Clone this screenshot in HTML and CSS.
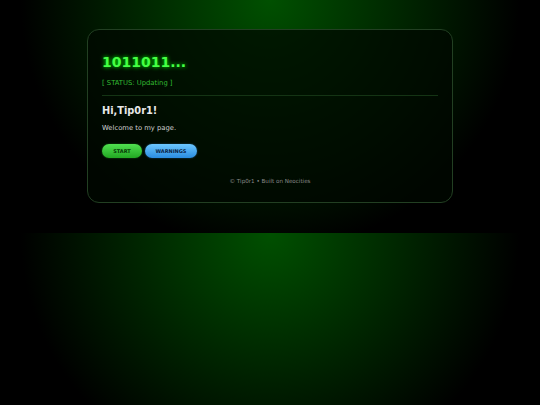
FILE: index.html
```html
<!DOCTYPE html>
<html lang="en">
<head>
<meta charset="utf-8">
<title>Tip0r1</title>
<link rel="stylesheet" href="styles.css">
</head>
<body>
<main class="card">
  <h1 class="title">1011011...</h1>
  <p class="status">[ STATUS: Updating ]</p>
  <hr class="divider">
  <h2 class="greeting">Hi,Tip0r1!</h2>
  <p class="welcome">Welcome to my page.</p>
  <div class="buttons">
    <a class="btn btn-start" href="#">START</a>
    <a class="btn btn-warn" href="#">WARNINGS</a>
  </div>
  <footer class="footer">© Tip0r1 • Built on Neocities</footer>
</main>
</body>
</html>
```
FILE: styles.css
```css
html {
  margin: 0;
  padding: 0;
}
body {
  margin: 0;
  padding: 29px 0 30px;
  font-family: "DejaVu Sans", Verdana, sans-serif;
  background: radial-gradient(circle at top, #005000 0%, #000000 70%);
  color: #cccccc;
}
.card {
  box-sizing: border-box;
  width: 366px;
  margin: 0 auto;
  padding: 24px 14px 17px;
  border: 1px solid #223f22;
  border-radius: 12px;
  background: rgba(0, 8, 0, 0.74);
}
.title {
  margin: 0;
  font-family: "DejaVu Sans", Verdana, sans-serif;
  font-weight: bold;
  font-size: 14px;
  line-height: 16px;
  color: #44ff44;
  text-shadow: 0 0 4px #00ff00;
}
.status {
  margin: 9px 0 0;
  font-size: 6.8px;
  line-height: 8px;
  color: #33bb33;
}
.divider {
  margin: 8px 0 0;
  border: 0;
  border-top: 1px solid #143414;
  height: 0;
}
.greeting {
  margin: 9px 0 0;
  font-size: 9.8px;
  font-weight: bold;
  line-height: 12px;
  color: #e8e8e8;
}
.welcome {
  margin: 7px 0 0;
  font-size: 6.8px;
  line-height: 8px;
  color: #d0d0d0;
}
.buttons {
  display: flex;
  gap: 3px;
  margin-top: 12px;
}
.btn {
  display: flex;
  align-items: center;
  justify-content: center;
  height: 14px;
  border-radius: 7px;
  font-size: 5px;
  font-weight: bold;
  text-decoration: none;
}
.btn-start {
  width: 40px;
  color: #073807;
  background: linear-gradient(#50e050, #22a822);
  box-shadow: 0 0 2px rgba(40, 200, 40, 0.5);
}
.btn-warn {
  width: 52px;
  color: #0a2448;
  background: linear-gradient(#6cc6ff, #2a8ce0);
  box-shadow: 0 0 2px rgba(60, 150, 230, 0.5);
}
.footer {
  margin-top: 20px;
  text-align: center;
  font-size: 5.6px;
  line-height: 7px;
  color: #8a8a8a;
}
```
